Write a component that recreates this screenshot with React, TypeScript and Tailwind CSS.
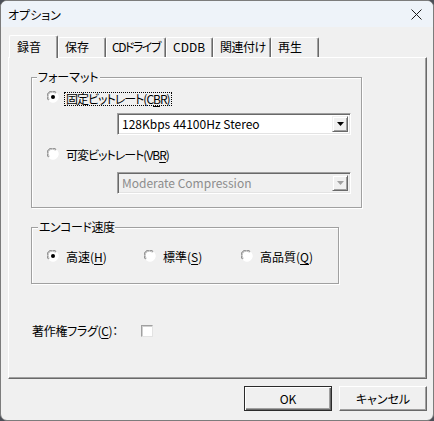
import React from "react";

const font = "font-['Noto_Sans_CJK_JP','Liberation_Sans',sans-serif] [font-feature-settings:'palt']";

function Radio({ checked }: { checked?: boolean }) {
  return (
    <svg width="12" height="12" viewBox="0 0 12 12" className="shrink-0">
      <circle cx="6" cy="6" r="5.5" fill="#ffffff" />
      <path d="M1.6 9.2 A5 5 0 0 1 9.2 1.6" stroke="#6e6e6e" strokeWidth="1" fill="none" />
      <path d="M2.4 8.4 A4 4 0 0 1 8.4 2.4" stroke="#b8b8b8" strokeWidth="1" fill="none" />
      <path d="M9.6 2.2 A5.2 5.2 0 0 1 2.2 9.6" stroke="#ffffff" strokeWidth="1" fill="none" />
      {checked && <circle cx="6" cy="6" r="2" fill="#000000" />}
    </svg>
  );
}

function Acc({ children }: { children: React.ReactNode }) {
  return <span className="underline underline-offset-[2px]">{children}</span>;
}

function Combo({ text, disabled }: { text: string; disabled?: boolean }) {
  return (
    <div
      className={`ml-[85px] w-[234px] h-[22px] flex border border-t-[#a0a0a0] border-l-[#a0a0a0] border-r-white border-b-white shadow-[inset_1px_1px_0_#696969,inset_-1px_-1px_0_#e3e3e3] p-[2px] ${
        disabled ? "bg-[#f0f0f0]" : "bg-white"
      }`}
    >
      <div
        className={`flex-1 flex items-center pl-[2px] text-[12px] leading-[14px] whitespace-nowrap ${
          disabled ? "text-[#8d8d8d]" : "text-black"
        }`}
      >
        {text}
      </div>
      <div className="w-[16px] h-full bg-[#f0f0f0] border border-t-[#f0f0f0] border-l-[#f0f0f0] border-r-[#696969] border-b-[#696969] shadow-[inset_1px_1px_0_#fff,inset_-1px_-1px_0_#a0a0a0] flex items-center justify-center">
        <svg width="7" height="4" viewBox="0 0 7 4">
          <path d="M0 0 H7 L3.5 4 Z" fill={disabled ? "#a0a0a0" : "#000"} />
        </svg>
      </div>
    </div>
  );
}

const tabs: [string, number, string][] = [
  ["録音", 49, "pl-[7px]"],
  ["保存", 48, "pl-[6px]"],
  ["CDドライブ", 60, "pl-[5px] tracking-[-1.5px]"],
  ["CDDB", 47, "pl-[6px]"],
  ["関連付け", 58, "pl-[6px] tracking-[-0.5px]"],
  ["再生", 48, "pl-[6px]"],
];

export default function App() {
  return (
    <div className={`w-[434px] h-[421px] bg-[#4b4f57] ${font} text-[12px] text-black`}>
      <div className="w-[434px] h-[421px] bg-[#f0f0f0] rounded-[7px] border border-[#7c7c7c] overflow-hidden flex flex-col">
        {/* title bar */}
        <div className="h-[26px] bg-[#eef3f9] flex items-center justify-between pl-[7px] pr-[10px] shrink-0">
          <span className="text-[12px] leading-[14px] pt-[1px]">オプション</span>
          <svg width="11" height="11" viewBox="0 0 11 11" className="mr-[1px]">
            <path d="M0.5 0.5 L10.5 10.5 M10.5 0.5 L0.5 10.5" stroke="#1a1a1a" strokeWidth="1" />
          </svg>
        </div>

        {/* body */}
        <div className="flex flex-col pl-[7px]">
          {/* tab strip */}
          <div className="h-[30px] flex items-end pl-[1px]">
            {tabs.map(([label, w, extra], i) =>
              i === 0 ? (
                <div
                  key={label}
                  style={{ width: w }}
                  className={`relative z-10 h-[23px] mb-[-1px] bg-[#f0f0f0] border-l border-t border-r border-l-white border-t-white border-r-[#696969] shadow-[inset_-1px_0_0_#a0a0a0] rounded-t-[2px] pt-[3px] leading-[16px] whitespace-nowrap ${extra}`}
                >
                  {label}
                </div>
              ) : (
                <div
                  key={label}
                  style={{ width: w }}
                  className={`h-[20px] bg-[#f0f0f0] border-l border-t border-r border-l-white border-t-white border-r-[#696969] shadow-[inset_-1px_0_0_#a0a0a0] rounded-t-[2px] pt-[1px] leading-[16px] whitespace-nowrap ${extra}`}
                >
                  {label}
                </div>
              )
            )}
          </div>

          {/* panel */}
          <div className="w-[419px] h-[322px] border border-t-white border-l-white border-r-[#696969] border-b-[#696969] shadow-[inset_-1px_-1px_0_#a0a0a0] flex flex-col">
            {/* group 1 */}
            <fieldset className="mt-[12px] ml-[22px] w-[331px] border border-[#a0a0a0] shadow-[inset_1px_1px_0_#fff,1px_1px_0_#fff]">
              <legend className="ml-[5px] px-[1px] leading-[14px] bg-[#f0f0f0]">フォーマット</legend>
              <div className="flex flex-col pb-[13px]">
                <div className="mt-[8px] h-[14px] flex items-center pl-[15px]">
                  <span className="mt-[-4px]">
                    <Radio checked />
                  </span>
                  <span className="ml-[5px] border border-dotted border-black px-[1px] leading-[12px] tracking-[-1px]">
                    固定ビットレート(C<Acc>B</Acc>R)
                  </span>
                </div>
                <div className="mt-[7px]">
                  <Combo text="128Kbps 44100Hz Stereo" />
                </div>
                <div className="mt-[13px] h-[14px] flex items-center pl-[15px]">
                  <span className="mt-[-3px]">
                    <Radio />
                  </span>
                  <span className="ml-[5px] border border-transparent px-[1px] leading-[12px] tracking-[-1px]">
                    可変ビットレート(VB<Acc>R</Acc>)
                  </span>
                </div>
                <div className="mt-[10px]">
                  <Combo text="Moderate Compression" disabled />
                </div>
              </div>
            </fieldset>

            {/* group 2 */}
            <fieldset className="mt-[12px] ml-[22px] w-[304px] border border-[#a0a0a0] shadow-[inset_1px_1px_0_#fff,1px_1px_0_#fff]">
              <legend className="ml-[6px] px-[1px] leading-[14px] bg-[#f0f0f0] tracking-[-0.5px]">エンコード速度</legend>
              <div className="mt-[16px] mb-[19px] h-[14px] flex items-center pl-[15px]">
                {[
                  ["高速(", "H", ")", true],
                  ["標準(", "S", ")", false],
                  ["高品質(", "Q", ")", false],
                ].map(([a, b, c, on]) => (
                  <div key={a as string} className="w-[97px] flex items-center">
                    <span className="mt-[-2px]">
                      <Radio checked={on as boolean} />
                    </span>
                    <span className="ml-[7px] leading-[14px]">
                      {a as string}
                      <Acc>{b as string}</Acc>
                      {c as string}
                    </span>
                  </div>
                ))}
              </div>
            </fieldset>

            {/* copyright */}
            <div className="mt-[40px] ml-[23px] h-[14px] flex items-center">
              <span className="w-[109px] leading-[14px] tracking-[-0.3px]">
                著作権フラグ(<Acc>C</Acc>)：
              </span>
              <span className="w-[12px] h-[12px] bg-white border border-t-[#a0a0a0] border-l-[#a0a0a0] border-r-[#e3e3e3] border-b-[#e3e3e3] shadow-[inset_1px_1px_0_#d0d0d0]" />
            </div>
          </div>

          {/* buttons */}
          <div className="mt-[7px] flex justify-end pr-[6px] gap-[7px]">
            <button className="w-[88px] h-[25px] bg-[#f0f0f0] border border-[#2b2b2b] shadow-[inset_1px_1px_0_#fff,inset_-1px_-1px_0_#696969,inset_-2px_-2px_0_#a0a0a0] leading-[14px]">
              OK
            </button>
            <button className="w-[88px] h-[25px] bg-[#f0f0f0] border border-t-white border-l-white border-r-[#696969] border-b-[#696969] shadow-[inset_-1px_-1px_0_#a0a0a0] leading-[14px]">
              キャンセル
            </button>
          </div>
        </div>
      </div>
    </div>
  );
}
